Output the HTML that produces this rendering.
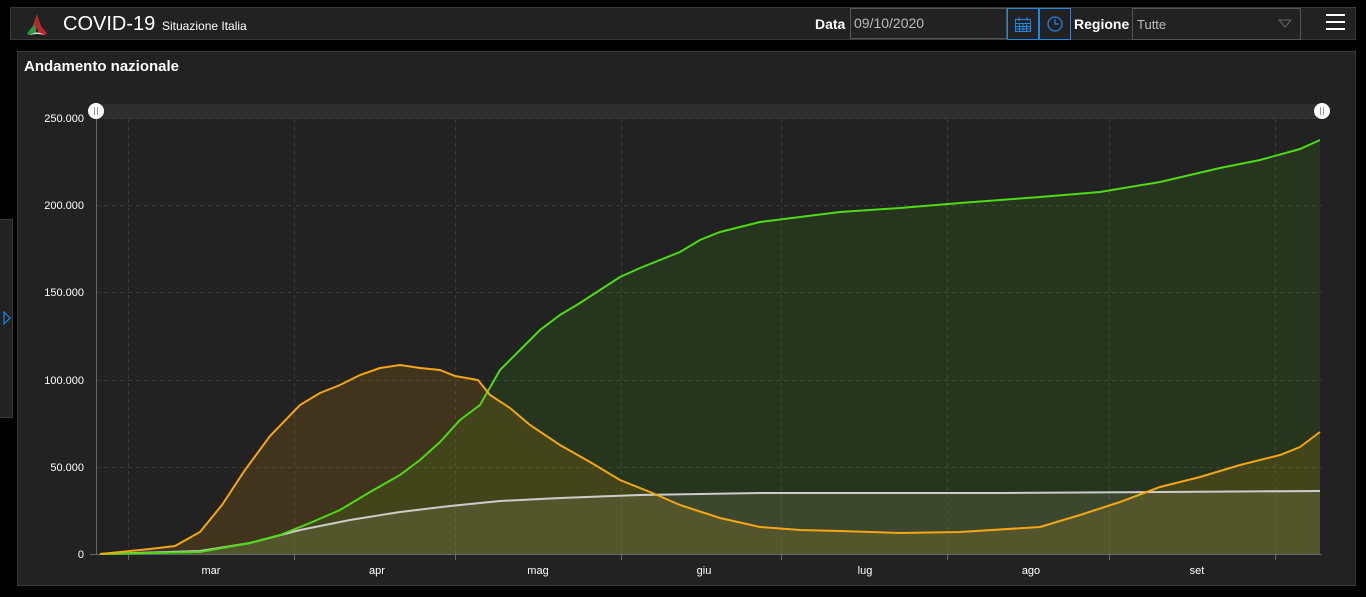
<!DOCTYPE html>
<html><head><meta charset="utf-8"><style>
body{margin:0;width:1366px;height:597px;background:#000;overflow:hidden;font-family:"Liberation Sans",sans-serif;position:relative}
.hdr{position:absolute;left:10px;top:7px;width:1346px;height:33px;background:#222;border:1px solid #3a3a3a;box-sizing:border-box}
.t{position:absolute;color:#fff}
.panel{position:absolute;left:17px;top:51px;width:1339px;height:535px;background:#222;border:1px solid #3a3a3a;box-sizing:border-box}
.side{position:absolute;left:0;top:219px;width:13px;height:199px;background:#222;border:1px solid #3a3a3a;border-left:none;box-sizing:border-box}
</style></head><body>
<div class="hdr"></div>
<svg style="position:absolute;left:24px;top:12px" width="26" height="24" viewBox="0 0 26 24">
<path d="M13 2 L9 14 L4 20 Q2 23 6 23 L12 21 Z" fill="#2a9a3a"/>
<path d="M13 2 L17 14 L22 20 Q24 23 20 23 L14 21 Z" fill="#c0262c"/>
<path d="M6 23 Q13 18 20 23 Q13 21 6 23Z" fill="#ddd"/>
<path d="M13 2 L10 13 L13 17 L16 13Z" fill="#b4262c"/>
</svg>
<div class="t" style="left:63px;top:13px;font-size:20px">COVID-19</div>
<div class="t" style="left:162px;top:19px;font-size:12px">Situazione Italia</div>
<div class="t" style="left:815px;top:16px;font-size:14px;font-weight:bold">Data</div>
<div style="position:absolute;left:850px;top:8px;width:157px;height:31px;border:1px solid #555;box-sizing:border-box;color:#bbb;font-size:14px;padding:6px 3px">09/10/2020</div>
<div style="position:absolute;left:1007px;top:8px;width:32px;height:32px;border:1px solid #1e88e5;box-sizing:border-box"></div>
<div style="position:absolute;left:1039px;top:8px;width:32px;height:32px;border:1px solid #1e88e5;box-sizing:border-box"></div>
<svg style="position:absolute;left:1014px;top:15px" width="18" height="18"><g fill="none" stroke="#1e88e5" stroke-width="1"><rect x="1.5" y="4.5" width="15" height="12"/><path d="M1.5 8.5h15M1.5 11.5h15M1.5 14h15M5.5 8.5v8M9 8.5v8M12.5 8.5v8M5 2v4M13 2v4"/></g></svg>
<svg style="position:absolute;left:1046px;top:15px" width="18" height="18"><g fill="none" stroke="#1e88e5" stroke-width="1.2"><circle cx="9" cy="9" r="7"/><path d="M9 4v5h4"/></g></svg>
<div class="t" style="left:1074px;top:16px;font-size:14px;font-weight:bold">Regione</div>
<div style="position:absolute;left:1132px;top:8px;width:169px;height:32px;border:1px solid #555;box-sizing:border-box;color:#bbb;font-size:13px;padding:8px 4px">Tutte</div>
<svg style="position:absolute;left:1278px;top:19px" width="14" height="9"><path d="M1 1 L7 8 L13 1Z" fill="none" stroke="#666"/></svg>
<div style="position:absolute;left:1326px;top:14px;width:19px;height:2px;background:#fff;box-shadow:0 7px 0 #fff,0 14px 0 #fff"></div>
<div class="side"></div>
<svg style="position:absolute;left:3px;top:311px" width="8" height="14"><path d="M1 1 L7 7 L1 13Z" fill="none" stroke="#1e88e5" stroke-width="1.2"/></svg>
<div class="panel"></div>
<div class="t" style="left:24px;top:58px;font-size:15px;font-weight:bold">Andamento nazionale</div>
<svg style="position:absolute;left:0;top:0" width="1366" height="597">
<rect x="96" y="104" width="1227" height="15" fill="#2e2e2e"/>
<g stroke="#3a3a3a" stroke-dasharray="4,4">
<path d="M96 118.5H1322M96 205.5H1322M96 292.5H1322M96 380.5H1322M96 467.5H1322"/>
<path d="M128.5 119V554M294.5 119V554M455.5 119V554M621.5 119V554M781.5 119V554M947.5 119V554M1109.5 119V554M1275.5 119V554"/>
</g>
<path d="M96.5 119V554.5H1322" stroke="#666" fill="none"/>
<g stroke="#666"><path d="M128.5 554v6M294.5 554v6M455.5 554v6M621.5 554v6M781.5 554v6M947.5 554v6M1109.5 554v6M1275.5 554v6M90 554.5h6"/></g>
<g fill="#fff" font-size="11" text-anchor="end" font-family="Liberation Sans">
<text x="84" y="122">250.000</text><text x="84" y="209">200.000</text><text x="84" y="296">150.000</text><text x="84" y="384">100.000</text><text x="84" y="471">50.000</text><text x="84" y="558">0</text></g>
<g fill="#fff" font-size="11" text-anchor="middle" font-family="Liberation Sans">
<text x="211" y="574">mar</text><text x="377" y="574">apr</text><text x="538" y="574">mag</text><text x="704" y="574">giu</text><text x="865" y="574">lug</text><text x="1031" y="574">ago</text><text x="1197" y="574">set</text></g>
<path d="M100 554 L150 549 L175 546 L200 532 L222 505 L245 470 L270 436 L300 405 L320 393 L340 385 L360 375 L380 368 L400 365 L420 368 L440 370 L455 376 L478 380 L490 395 L510 408 L530 425 L560 445 L590 462 L620 480 L650 492 L680 505 L720 518 L760 527 L800 530 L840 531 L900 533 L960 532 L1040 527 L1080 515 L1120 502 L1160 487 L1200 477 L1240 465 L1280 455 L1300 447 L1320 432 L1320 554Z" fill="rgba(255,165,0,0.14)" stroke="none"/>
<path d="M100 554 L200 552 L250 543 L280 535 L310 523 L340 510 L370 492 L400 475 L420 460 L440 442 L460 420 L480 405 L500 370 L520 350 L540 330 L560 315 L580 303 L600 290 L620 277 L640 268 L660 260 L680 252 L700 240 L720 232 L760 222 L800 217 L840 212 L900 208 L960 203 L1040 197 L1100 192 L1160 182 L1220 168 L1260 160 L1300 149 L1320 140 L1320 554Z" fill="rgba(76,200,0,0.12)"/>
<path d="M100 554 L200 551 L250 543 L300 530 L350 520 L400 512 L450 506 L500 501 L560 498 L640 495 L760 493 L1000 493 L1320 491 L1320 554Z" fill="rgba(200,200,160,0.13)"/>
<g fill="none" stroke-width="2">
<path d="M100 554 L200 551 L250 543 L300 530 L350 520 L400 512 L450 506 L500 501 L560 498 L640 495 L760 493 L1000 493 L1320 491" stroke="#ccc"/>
<path d="M100 554 L200 552 L250 543 L280 535 L310 523 L340 510 L370 492 L400 475 L420 460 L440 442 L460 420 L480 405 L500 370 L520 350 L540 330 L560 315 L580 303 L600 290 L620 277 L640 268 L660 260 L680 252 L700 240 L720 232 L760 222 L800 217 L840 212 L900 208 L960 203 L1040 197 L1100 192 L1160 182 L1220 168 L1260 160 L1300 149 L1320 140" stroke="#4cdc14"/>
<path d="M100 554 L150 549 L175 546 L200 532 L222 505 L245 470 L270 436 L300 405 L320 393 L340 385 L360 375 L380 368 L400 365 L420 368 L440 370 L455 376 L478 380 L490 395 L510 408 L530 425 L560 445 L590 462 L620 480 L650 492 L680 505 L720 518 L760 527 L800 530 L840 531 L900 533 L960 532 L1040 527 L1080 515 L1120 502 L1160 487 L1200 477 L1240 465 L1280 455 L1300 447 L1320 432" stroke="#f5a614"/>
</g>
<circle cx="96" cy="111" r="8" fill="#fff"/><path d="M94.5 107v8M97.5 107v8" stroke="#999"/>
<circle cx="1322" cy="111" r="8" fill="#fff"/><path d="M1320.5 107v8M1323.5 107v8" stroke="#999"/>
</svg>
</body></html>
